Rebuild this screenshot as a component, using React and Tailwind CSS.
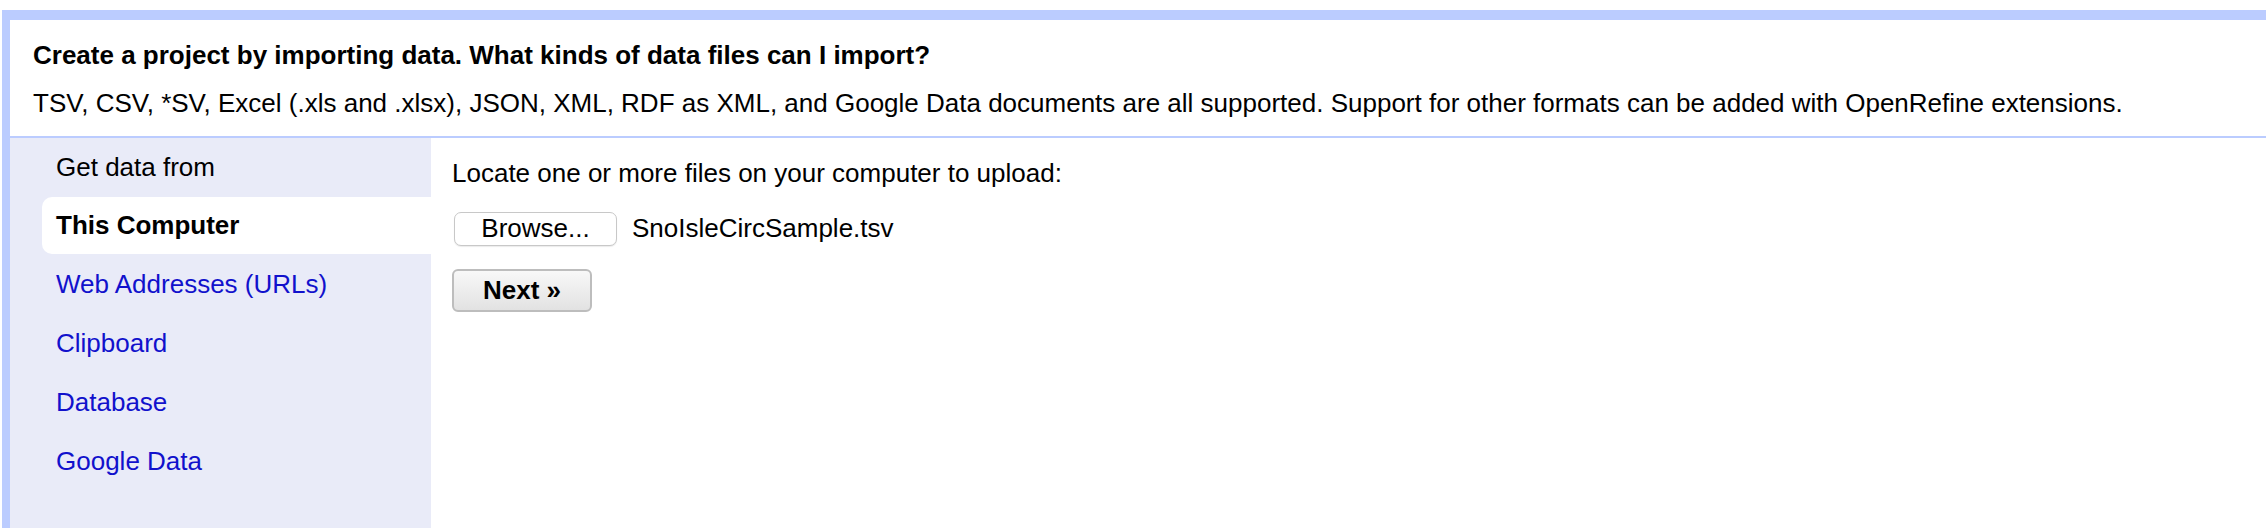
export default function App() {
  const items = ["Web Addresses (URLs)", "Clipboard", "Database", "Google Data"];
  return (
    <div className="w-full h-[528px] bg-white overflow-hidden pt-[10px] pl-[2px] text-black" style={{ fontFamily: '"Liberation Sans", Arial, sans-serif' }}>
      <div className="h-full border-t-[10px] border-l-[8px] border-[#bbccff] flex flex-col">
        <div className="pl-[23px] pt-[20px] pb-[18px] border-b-2 border-[#bbccff]">
          <div className="text-[26px] leading-[30px] font-bold">Create a project by importing data. What kinds of data files can I import?</div>
          <div className="text-[26px] leading-[30px] mt-[18px]">TSV, CSV, *SV, Excel (.xls and .xlsx), JSON, XML, RDF as XML, and Google Data documents are all supported. Support for other formats can be added with OpenRefine extensions.</div>
        </div>
        <div className="flex flex-1">
          <div className="w-[421px] bg-[#e9ebf8] text-[26px]">
            <div className="h-[58px] flex items-center pl-[46px]">Get data from</div>
            <div className="h-[59px] flex items-center">
              <div className="ml-[32px] flex-1 h-[57px] bg-white rounded-l-[10px] flex items-center pl-[14px] font-bold">This Computer</div>
            </div>
            {items.map((t) => (
              <div key={t} className="h-[59px] flex items-center pl-[46px] text-[#1111cc]">{t}</div>
            ))}
          </div>
          <div className="flex-1 pl-[21px] pt-[20px] text-[26px]">
            <div className="leading-[30px]">Locate one or more files on your computer to upload:</div>
            <div className="flex items-center mt-[21px]">
              <div className="ml-[2px] w-[163px] h-[34px] bg-white border border-[#c8c8c8] rounded-[7px] flex items-center justify-center shadow-[0_1px_1px_rgba(0,0,0,0.08)]">Browse...</div>
              <div className="ml-[15px]">SnoIsleCircSample.tsv</div>
            </div>
            <div className="mt-[21px] w-[140px] h-[43px] rounded-[6px] border-2 border-[#bdbdbd] bg-gradient-to-b from-[#f8f8f8] to-[#e2e2e2] flex items-center justify-center font-bold">Next »</div>
          </div>
        </div>
      </div>
    </div>
  );
}
